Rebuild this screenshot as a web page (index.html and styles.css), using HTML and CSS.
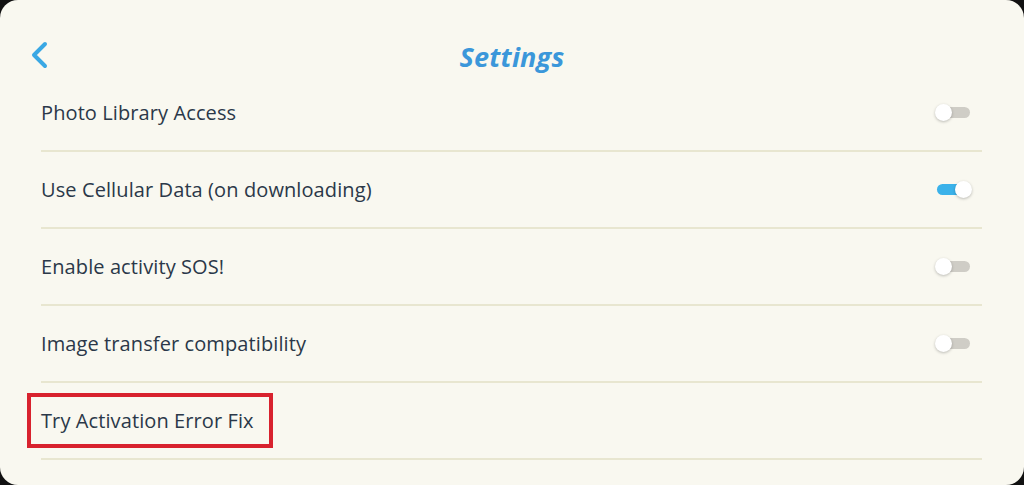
FILE: index.html
```html
<!DOCTYPE html>
<html>
<head>
    <title>Settings</title>
    <meta name="viewport" content="width=device-width, initial-scale=1.0">
<link rel="stylesheet" href="styles.css">
</head>
<body>
    <div class="screen">
        <div class="header">
            <button class="back-button" aria-label="Back">
                <svg width="20" height="28" viewBox="0 0 20 28"><path d="M15 3 L4 14 L15 25" fill="none" stroke="#3aa8e4" stroke-width="4" stroke-linecap="round" stroke-linejoin="round"/></svg>
            </button>
            <h1 class="title">Settings</h1>
        </div>
        <ul class="settings-list">
            <li class="setting-row">
                <span class="setting-label">Photo Library Access</span>
                <span class="toggle"></span>
            </li>
            <li class="setting-row">
                <span class="setting-label">Use Cellular Data (on downloading)</span>
                <span class="toggle on"></span>
            </li>
            <li class="setting-row">
                <span class="setting-label">Enable activity SOS!</span>
                <span class="toggle"></span>
            </li>
            <li class="setting-row">
                <span class="setting-label">Image transfer compatibility</span>
                <span class="toggle"></span>
            </li>
            <li class="setting-row">
                <span class="setting-label highlight">Try Activation Error Fix</span>
            </li>
        </ul>
    </div>
</body>
</html>
```
FILE: styles.css
```css
:root {
    --bg-color: #f9f8f0;
    --text-color: #2b3849;
    --title-color: #3b97da;
    --line-color: #e8e6d0;
    --toggle-off: #cfcdc6;
    --toggle-on: #3bb2ea;
    --mark-color: #d8222e;
}

body, html {
    height: 100%;
    margin: 0;
    padding: 0;
    overflow: hidden;
    background-color: #111;
}

.screen {
    height: 485px;
    box-sizing: border-box;
    background-color: var(--bg-color);
    border-radius: 18px;
    font-family: "Open Sans", "Noto Sans", sans-serif;
    color: var(--text-color);
}

.header {
    display: grid;
    grid-template-columns: 1fr auto 1fr;
    align-items: center;
    height: 75px;
    padding: 37px 0 0 30px;
    box-sizing: border-box;
}

.back-button {
    justify-self: start;
    background: none;
    border: none;
    padding: 0;
    width: 20px;
    height: 28px;
    margin-top: -2px;
}

.title {
    margin: 0 0 0 -30px;
    font-size: 27px;
    font-weight: 700;
    font-style: italic;
    color: var(--title-color);
    letter-spacing: 0.2px;
}

.settings-list {
    list-style-type: none;
    margin: 0 42px 0 41px;
    padding: 0;
}

.setting-row {
    display: flex;
    align-items: center;
    justify-content: space-between;
    height: 75px;
    padding-right: 12px;
    border-bottom: 2px solid var(--line-color);
}

.setting-label {
    font-size: 20px;
    letter-spacing: 0.1px;
}

.setting-label.highlight {
    margin-left: -14px;
    padding: 10px 15px 10px 10px;
    border: 4px solid var(--mark-color);
}

.toggle {
    position: relative;
    width: 33px;
    height: 11px;
    border-radius: 6px;
    background-color: var(--toggle-off);
}

.toggle::after {
    content: "";
    position: absolute;
    top: -3px;
    left: -2px;
    width: 17px;
    height: 17px;
    border-radius: 50%;
    background: #fff;
    box-shadow: 0 1px 3px rgba(0, 0, 0, 0.25);
}

.toggle.on {
    background-color: var(--toggle-on);
}

.toggle.on::after {
    left: 18px;
}
```
